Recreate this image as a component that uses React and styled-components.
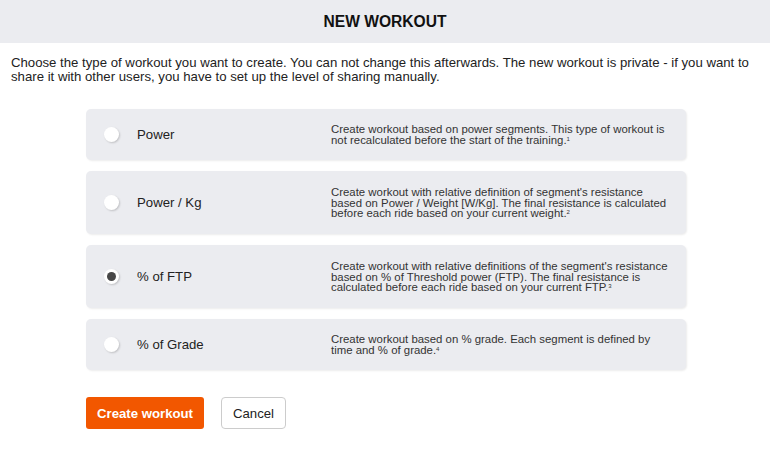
import React, { useState } from "react";
import styled, { createGlobalStyle } from "styled-components";

const Global = createGlobalStyle`
  html, body { margin: 0; padding: 0; background: #fff; }
  body { font-family: "Liberation Sans", Arial, sans-serif; color: #333; }
`;

const Header = styled.div`
  height: 43px;
  background: #ebecf0;
  display: flex;
  align-items: center;
  justify-content: center;
`;

const Title = styled.h1`
  margin: 0;
  font-size: 15.6px;
  font-weight: bold;
  color: #111;
  padding-top: 1px;
`;

const Body = styled.div`
  padding: 13px 11px 0 11px;
`;

const Intro = styled.p`
  margin: 0;
  font-size: 13.2px;
  line-height: 14px;
  color: #222;
`;

const List = styled.div`
  width: 600px;
  margin: 25px 0 0 75px;
  display: flex;
  flex-direction: column;
  gap: 11px;
`;

const Card = styled.label`
  display: flex;
  align-items: center;
  min-height: ${(p) => p.$h}px;
  box-sizing: border-box;
  background: #ebecf0;
  border-radius: 5px;
  box-shadow: 1px 1px 2px rgba(0, 0, 0, 0.08);
  padding: 0 4px 0 18px;
  cursor: pointer;
`;

const Radio = styled.span`
  width: 15px;
  height: 15px;
  border-radius: 50%;
  background: #fff;
  box-shadow: 1px 1px 2px rgba(0, 0, 0, 0.18);
  display: flex;
  align-items: center;
  justify-content: center;
  flex: none;
  &::after {
    content: "";
    width: 9px;
    height: 9px;
    border-radius: 50%;
    background: ${(p) => (p.$on ? "#474747" : "transparent")};
  }
`;

const Label = styled.span`
  width: 194px;
  margin-left: 18px;
  font-size: 13.2px;
  color: #222;
  flex: none;
`;

const Desc = styled.span`
  flex: 1;
  display: flex;
  flex-direction: column;
  font-size: 11.4px;
  line-height: 10.8px;
  color: #333;
  padding-top: 1px;
`;

const Line = styled.span`
  white-space: nowrap;
`;

const Sup = styled.sup`
  font-size: 6px;
  vertical-align: top;
  position: relative;
  top: -1px;
`;

const Buttons = styled.div`
  display: flex;
  gap: 17px;
  margin: 27px 0 0 75px;
`;

const Primary = styled.button`
  height: 32px;
  padding: 0 11px;
  background: #f25700;
  color: #fff;
  border: none;
  border-radius: 3px;
  font-family: "Liberation Sans", Arial, sans-serif;
  font-weight: bold;
  font-size: 13.2px;
`;

const Secondary = styled.button`
  height: 32px;
  padding: 0 11px;
  background: #fff;
  color: #222;
  border: 1px solid #ccc;
  border-radius: 4px;
  font-family: "Liberation Sans", Arial, sans-serif;
  font-size: 13.2px;
`;

const options = [
  {
    id: "power",
    label: "Power",
    h: 51,
    lines: [
      "Create workout based on power segments. This type of workout is",
      "not recalculated before the start of the training.",
    ],
    n: "1",
  },
  {
    id: "pkg",
    label: "Power / Kg",
    h: 63,
    lines: [
      "Create workout with relative definition of segment's resistance",
      "based on Power / Weight [W/Kg]. The final resistance is calculated",
      "before each ride based on your current weight.",
    ],
    n: "2",
  },
  {
    id: "ftp",
    label: "% of FTP",
    h: 63,
    lines: [
      "Create workout with relative definitions of the segment's resistance",
      "based on % of Threshold power (FTP). The final resistance is",
      "calculated before each ride based on your current FTP.",
    ],
    n: "3",
  },
  {
    id: "grade",
    label: "% of Grade",
    h: 51,
    lines: [
      "Create workout based on % grade. Each segment is defined by",
      "time and % of grade.",
    ],
    n: "4",
  },
];

export default function App() {
  const [sel, setSel] = useState("ftp");
  return (
    <>
      <Global />
      <Header>
        <Title>NEW WORKOUT</Title>
      </Header>
      <Body>
        <Intro>
          Choose the type of workout you want to create. You can not change this afterwards. The new workout is private - if you want to share it with other users, you have to set up the level of sharing manually.
        </Intro>
        <List>
          {options.map((o) => (
            <Card key={o.id} $h={o.h} onClick={() => setSel(o.id)}>
              <Radio $on={sel === o.id} />
              <Label>{o.label}</Label>
              <Desc>
                {o.lines.map((l, i) => (
                  <Line key={i}>
                    {l}
                    {i === o.lines.length - 1 && <Sup>{o.n}</Sup>}
                  </Line>
                ))}
              </Desc>
            </Card>
          ))}
        </List>
        <Buttons>
          <Primary>Create workout</Primary>
          <Secondary>Cancel</Secondary>
        </Buttons>
      </Body>
    </>
  );
}
